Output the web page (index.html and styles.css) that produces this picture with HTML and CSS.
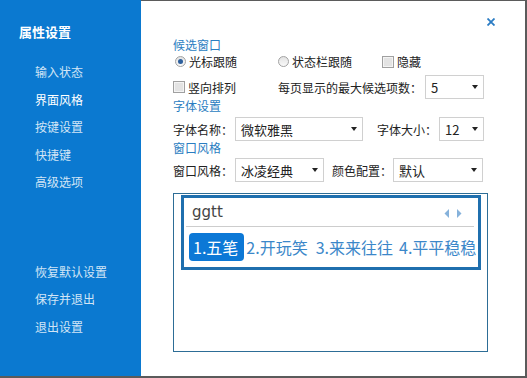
FILE: index.html
```html
<!DOCTYPE html>
<html lang="zh-CN">
<head>
  <meta charset="UTF-8">
  <title>属性设置</title>
  <link rel="stylesheet" href="styles.css">
</head>
<body>
  <div class="window">
    <!-- 左侧菜单 -->
    <aside class="sidebar">
      <div class="side-title">属性设置</div>
      <ul class="side-menu">
        <li>输入状态</li>
        <li class="active">界面风格</li>
        <li>按键设置</li>
        <li>快捷键</li>
        <li>高级选项</li>
      </ul>
      <ul class="side-menu side-bottom">
        <li>恢复默认设置</li>
        <li>保存并退出</li>
        <li>退出设置</li>
      </ul>
    </aside>

    <!-- 右侧设置面板 -->
    <main class="panel">
      <div class="panel-top">
        <svg class="close" width="8" height="8" viewBox="0 0 8 8">
          <path d="M0.5 0.5L7.5 7.5M7.5 0.5L0.5 7.5" stroke="#2b7cc4" stroke-width="1.8" fill="none"/>
        </svg>
      </div>

      <div class="section-title first">候选窗口</div>
      <div class="row row-opts">
        <label class="opt opt-a"><span class="radio on"></span>光标跟随</label>
        <label class="opt opt-b"><span class="radio"></span>状态栏跟随</label>
        <label class="opt"><span class="check"></span>隐藏</label>
      </div>
      <div class="row row-sel">
        <label class="opt opt-wide"><span class="check"></span>竖向排列</label>
        <span class="label">每页显示的最大候选项数：</span>
        <div class="select sel-num"><span>5</span><i class="caret"></i></div>
      </div>

      <div class="section-title">字体设置</div>
      <div class="row row-sel row-font">
        <span class="label">字体名称：</span>
        <div class="select sel-font"><span>微软雅黑</span><i class="caret"></i></div>
        <span class="label label-size">字体大小：</span>
        <div class="select sel-size"><span>12</span><i class="caret"></i></div>
      </div>

      <div class="section-title">窗口风格</div>
      <div class="row row-sel row-style">
        <span class="label">窗口风格：</span>
        <div class="select sel-style"><span>冰凌经典</span><i class="caret"></i></div>
        <span class="label label-color">颜色配置：</span>
        <div class="select sel-color"><span>默认</span><i class="caret"></i></div>
      </div>

      <!-- 候选窗口预览 -->
      <div class="preview">
        <div class="cand-box">
          <div class="cand-input">
            <span class="code">ggtt</span>
            <svg class="pager" width="19" height="9" viewBox="0 0 19 9">
              <polygon points="5,0 0.5,4.5 5,9" fill="#86b2db"/>
              <polygon points="13,0 17.5,4.5 13,9" fill="#86b2db"/>
            </svg>
          </div>
          <div class="cand-list">
            <span class="cand sel">1.五笔</span>
            <span class="cand">2.开玩笑</span>
            <span class="cand">3.来来往往</span>
            <span class="cand c4">4.平平稳稳</span>
          </div>
        </div>
      </div>
    </main>
  </div>
</body>
</html>
```

FILE: styles.css
```css
:root {
  --side-bg: #0b79d0;
  --frame: #5b5b5b;
  --title-blue: #2a7dc1;
  --cand-blue: #3b87c9;
}

* {
  box-sizing: border-box;
}

body {
  margin: 0;
  font-family: "Noto Sans CJK SC", "Noto Sans", sans-serif;
  font-size: 12px;
  color: #222;
  background: #fff;
}

.window {
  display: flex;
  width: 527px;
  height: 378px;
  border-bottom: 2px solid var(--frame);
}

/* 左侧菜单 */
.sidebar {
  width: 141px;
  background: var(--side-bg);
  color: #fff;
  display: flex;
  flex-direction: column;
}

.side-title {
  padding: 22px 0 0 19px;
  font-size: 13px;
  font-weight: bold;
  line-height: 20px;
}

.side-menu {
  list-style: none;
  margin: 16px 0 0;
  padding: 0 0 0 35px;
}
.side-menu li {
  height: 27.5px;
  line-height: 27.5px;
  color: #d2e5f6;
}
.side-menu li.active {
  color: #fff;
}
.side-bottom {
  margin-top: auto;
  padding-bottom: 36px;
}

/* 右侧面板 */
.panel {
  flex: 1;
  border-top: 1px solid var(--frame);
  border-right: 2px solid var(--frame);
  padding-left: 32px;
}

.panel-top {
  height: 36px;
  display: flex;
  justify-content: flex-end;
  align-items: flex-start;
  padding: 17px 30px 0 0;
}
.close {
  display: block;
}

.section-title {
  color: var(--title-blue);
  line-height: 14px;
  height: 14px;
}
.section-title.first {
  margin-top: 1px;
}

.row {
  display: flex;
  align-items: center;
}
.row-opts {
  height: 19px;
}
.row-sel {
  height: 24px;
  margin-top: 4px;
}
.row-style {
  margin-top: 3px;
}

.opt {
  display: flex;
  align-items: center;
  gap: 3px;
}
.opt-a {
  width: 105px;
  padding-left: 2px;
}
.opt-b {
  width: 104px;
}
.opt-wide {
  width: 105px;
}

.radio {
  position: relative;
  width: 11px;
  height: 11px;
  border-radius: 50%;
  border: 1px solid #a2a2a2;
  background: linear-gradient(#e2e2e2, #fafafa);
}
.radio.on::after {
  content: '';
  position: absolute;
  inset: 2px;
  border-radius: 50%;
  background: #2d5f9c;
}

.check {
  width: 12px;
  height: 12px;
  border: 1px solid #a0a0a0;
  background: #e3e3e3;
  box-shadow: inset 0 0 0 1px #f4f4f4;
}

.label {
  white-space: nowrap;
}

.select {
  display: flex;
  align-items: center;
  justify-content: space-between;
  height: 24px;
  border: 1px solid #d0d0d0;
  padding: 0 5px 0 5px;
  margin-left: 3px;
  font-size: 13px;
}
.caret {
  width: 0;
  height: 0;
  border-left: 3.5px solid transparent;
  border-right: 3.5px solid transparent;
  border-top: 4px solid #222;
}

.sel-num { width: 59px; }
.sel-font { width: 128px; margin-left: 2px; }
.sel-size { width: 45px; margin-left: 2px; }
.sel-style { width: 89px; margin-left: 2px; }
.sel-color { width: 90px; margin-left: 1px; }
.label-size { margin-left: 14px; }
.label-color { margin-left: 8px; }

/* 预览区 */
.preview {
  width: 315px;
  height: 159px;
  margin-top: 11px;
  border: 1px solid #2d6d96;
  padding: 1px 6px 0 7px;
}

.cand-box {
  height: 75px;
  border: 3px solid #1f6fae;
  background: #fff;
}

.cand-input {
  height: 29px;
  display: flex;
  align-items: center;
  justify-content: space-between;
  margin: 0 4px 0 2px;
  padding: 0 11px 0 6px;
  border-bottom: 1px solid #cdcdcd;
}
.code {
  font-family: "DejaVu Sans", sans-serif;
  font-size: 15px;
  color: #444;
  line-height: 20px;
}
.pager {
  display: block;
  margin-top: 2px;
}

.cand-list {
  display: flex;
  align-items: center;
  height: 40px;
  padding-left: 5px;
}
.cand {
  font-size: 16px;
  line-height: 28px;
  color: var(--cand-blue);
  white-space: nowrap;
}
.cand + .cand {
  margin-left: 8px;
}
.cand.sel {
  height: 28px;
  padding: 0 6px 0 4px;
  border-radius: 4px;
  background: #0c78d6;
  color: #fff;
}
.cand.sel + .cand {
  margin-left: 2px;
}
.cand.c4 {
  margin-left: 6px;
}
```
